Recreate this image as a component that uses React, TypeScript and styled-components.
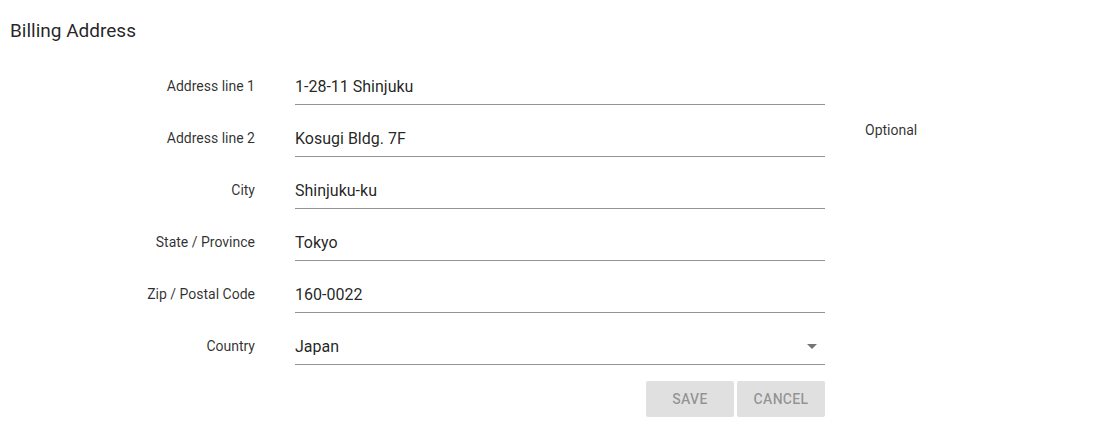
import React from "react";
import styled, { createGlobalStyle } from "styled-components";

const Global = createGlobalStyle`
  html, body { margin: 0; padding: 0; background: #fff; }
  body { font-family: Roboto, "Liberation Sans", sans-serif; }
  * { box-sizing: border-box; }
`;

const Page = styled.div`
  padding: 20px 10px 0 10px;
`;

const Title = styled.h2`
  margin: 0;
  font-size: 19px;
  line-height: 22px;
  font-weight: 400;
  color: rgba(0, 0, 0, 0.87);
`;

const Form = styled.form`
  margin-top: 27px;
  display: grid;
  grid-template-columns: 245px 530px 1fr;
  column-gap: 40px;
  row-gap: 16px;
`;

const Label = styled.label`
  font-size: 14px;
  color: rgba(0, 0, 0, 0.82);
  text-align: right;
  align-self: center;
  line-height: 20px;
  padding-bottom: 3px;
`;

const Field = styled.div`
  height: 36px;
  border-bottom: 1px solid rgba(0, 0, 0, 0.42);
  display: flex;
  align-items: center;
  position: relative;
`;

const Input = styled.input`
  border: none;
  outline: none;
  background: transparent;
  padding: 0;
  margin: 0;
  width: 100%;
  font-family: Roboto, "Liberation Sans", sans-serif;
  font-size: 16px;
  color: rgba(0, 0, 0, 0.87);
  line-height: 20px;
`;

const SelectText = styled.span`
  flex: 1;
  font-size: 16px;
  color: rgba(0, 0, 0, 0.87);
  line-height: 20px;
`;

const Arrow = styled.svg`
  width: 10px;
  height: 5px;
  margin-right: 8px;
  fill: rgba(0, 0, 0, 0.54);
`;

const Hint = styled.div`
  font-size: 14px;
  line-height: 20px;
  color: rgba(0, 0, 0, 0.82);
  align-self: start;
  margin-top: -1px;
`;

const Actions = styled.div`
  grid-column: 2;
  display: flex;
  justify-content: flex-end;
  gap: 3px;
`;

const Button = styled.button`
  width: 88px;
  height: 36px;
  border: none;
  border-radius: 2px;
  background: #e0e0e0;
  color: rgba(0, 0, 0, 0.36);
  font-family: Roboto, "Liberation Sans", sans-serif;
  font-size: 14px;
  font-weight: 500;
  letter-spacing: 0.3px;
  text-transform: uppercase;
  padding: 0;
`;

type Row = { label: string; value: string; hint?: string; select?: boolean };

const rows: Row[] = [
  { label: "Address line 1", value: "1-28-11 Shinjuku" },
  { label: "Address line 2", value: "Kosugi Bldg. 7F", hint: "Optional" },
  { label: "City", value: "Shinjuku-ku" },
  { label: "State / Province", value: "Tokyo" },
  { label: "Zip / Postal Code", value: "160-0022" },
  { label: "Country", value: "Japan", select: true },
];

export default function App() {
  return (
    <Page>
      <Global />
      <Title>Billing Address</Title>
      <Form onSubmit={(e) => e.preventDefault()}>
        {rows.map((r) => (
          <React.Fragment key={r.label}>
            <Label>{r.label}</Label>
            <Field>
              {r.select ? (
                <>
                  <SelectText>{r.value}</SelectText>
                  <Arrow viewBox="0 0 10 5">
                    <path d="M0 0 L10 0 L5 5 Z" />
                  </Arrow>
                </>
              ) : (
                <Input defaultValue={r.value} />
              )}
            </Field>
            <Hint>{r.hint ?? ""}</Hint>
          </React.Fragment>
        ))}
        <Actions>
          <Button type="button" disabled>
            Save
          </Button>
          <Button type="button" disabled>
            Cancel
          </Button>
        </Actions>
      </Form>
    </Page>
  );
}
